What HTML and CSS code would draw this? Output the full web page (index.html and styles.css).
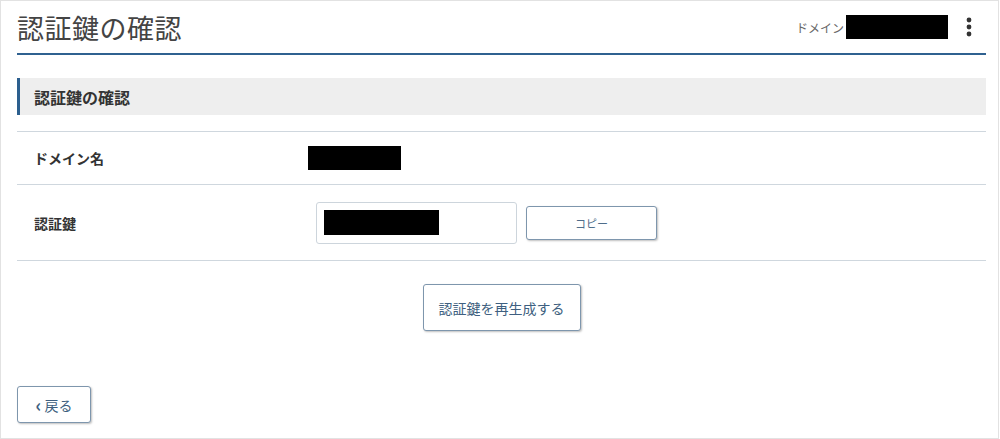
FILE: index.html
```html
<!DOCTYPE html>
<html lang="ja">
<head>
    <meta charset="UTF-8">
    <title>認証鍵の確認</title>
    <link rel="stylesheet" href="styles.css">
</head>
<body>
    <div class="frame">
        <div class="page-header">
            <h1>認証鍵の確認</h1>
            <div class="header-right">
                <span class="domain-label">ドメイン</span>
                <span class="masked masked-header"></span>
                <button class="kebab" type="button" aria-label="メニュー">
                    <svg width="6" height="20" viewBox="0 0 6 20">
                        <circle cx="3" cy="3" r="2.4" fill="#333"/>
                        <circle cx="3" cy="10" r="2.4" fill="#333"/>
                        <circle cx="3" cy="17" r="2.4" fill="#333"/>
                    </svg>
                </button>
            </div>
        </div>

        <h2 class="section-title">認証鍵の確認</h2>

        <div class="detail-table">
            <div class="detail-row">
                <div class="detail-label">ドメイン名</div>
                <div class="detail-value"><span class="masked masked-domain"></span></div>
            </div>
            <div class="detail-row detail-row-tall">
                <div class="detail-label">認証鍵</div>
                <div class="detail-value">
                    <div class="key-box"><span class="masked masked-key"></span></div>
                    <button class="btn btn-copy" type="button">コピー</button>
                </div>
            </div>
        </div>

        <div class="regen-area">
            <button class="btn btn-regen" type="button">認証鍵を再生成する</button>
        </div>

        <button class="btn btn-back" type="button"><span class="chev">&#8249;</span>戻る</button>
    </div>
</body>
</html>
```

FILE: styles.css
```css
body {
    margin: 0;
    font-family: "Noto Sans CJK JP", "Noto Sans", sans-serif;
    color: #333;
    background-color: #fff;
}

.frame {
    box-sizing: border-box;
    width: 999px;
    height: 439px;
    border: 1px solid #e2e2e2;
    padding: 0 12px 0 16px;
}

.page-header {
    display: flex;
    justify-content: space-between;
    align-items: center;
    height: 52px;
    border-bottom: 2px solid #2f6190;
}

.page-header h1 {
    margin: 0;
    font-size: 27px;
    font-weight: 400;
    color: #444;
    letter-spacing: 0.5px;
}

.header-right {
    display: flex;
    align-items: center;
}

.domain-label {
    font-size: 12px;
    color: #666;
    margin-right: 2px;
}

.masked {
    display: inline-block;
    background-color: #000;
}

.masked-header {
    width: 102px;
    height: 24px;
}

.kebab {
    border: none;
    background: none;
    padding: 0;
    margin: 0 14px 0 18px;
    display: flex;
    cursor: pointer;
}

.section-title {
    margin: 23px 0 16px;
    height: 37px;
    display: flex;
    align-items: center;
    padding-left: 14px;
    background-color: #eeeeee;
    border-left: 3px solid #2c5f8e;
    font-size: 16px;
    font-weight: 700;
    color: #333;
}

.detail-table {
    border-top: 1px solid #cfd7de;
}

.detail-row {
    display: flex;
    align-items: center;
    height: 52px;
    border-bottom: 1px solid #cfd7de;
    padding-left: 17px;
}

.detail-row-tall {
    height: 75px;
}

.detail-label {
    width: 274px;
    font-size: 14px;
    font-weight: 700;
    color: #333;
}

.detail-value {
    display: flex;
    align-items: center;
}

.masked-domain {
    width: 93px;
    height: 24px;
}

.key-box {
    box-sizing: border-box;
    width: 201px;
    height: 42px;
    margin-left: 8px;
    padding: 7px;
    border: 1px solid #cdd5dc;
    border-radius: 3px;
}

.masked-key {
    width: 115px;
    height: 25px;
}

.btn {
    box-sizing: border-box;
    background-color: #fff;
    border: 1px solid #7e96ad;
    border-radius: 3px;
    box-shadow: 1px 1px 2px rgba(0, 0, 0, 0.25);
    color: #3e5f80;
    font-family: "Noto Sans CJK JP", "Noto Sans", sans-serif;
    cursor: pointer;
}

.btn-copy {
    width: 131px;
    height: 34px;
    margin-left: 9px;
    font-size: 11px;
    color: #4f6d8a;
}

.regen-area {
    display: flex;
    justify-content: center;
    margin-top: 23px;
}

.btn-regen {
    width: 158px;
    height: 47px;
    font-size: 14px;
}

.btn-back {
    display: flex;
    align-items: center;
    justify-content: center;
    margin-top: 55px;
    width: 74px;
    height: 37px;
    font-size: 14px;
}

.chev {
    font-size: 18px;
    font-weight: 700;
    line-height: 1;
    margin-right: 3px;
    margin-top: -2px;
}
```
